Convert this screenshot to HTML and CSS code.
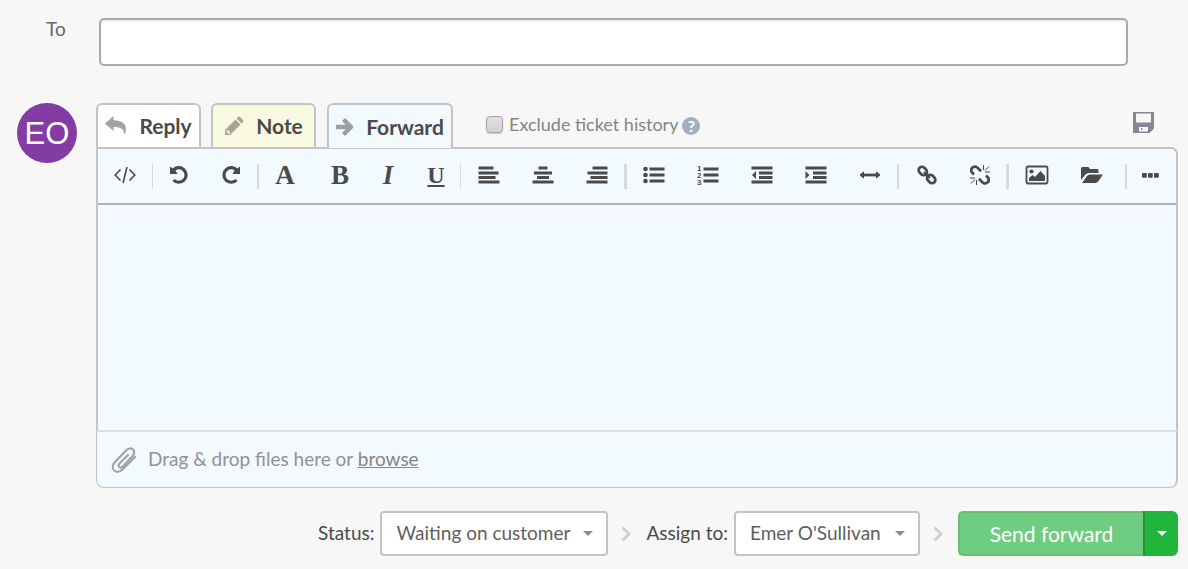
FILE: index.html
```html
<!DOCTYPE html>
<html lang="en">
<head>
    <meta charset="UTF-8">
    <meta name="viewport" content="width=device-width, initial-scale=1.0">
    <title>Forward ticket</title>
    <link rel="stylesheet" href="styles.css">
</head>
<body>
    <form class="composer">
        <div class="to-row">
            <label for="to">To</label>
            <input type="text" id="to" class="to-input">
        </div>

        <div class="reply-row">
            <div class="avatar">EO</div>

            <div class="editor">
                <div class="tabs">
                    <button type="button" class="tab tab-reply">
                        <svg width="22" height="20" viewBox="0 0 22 20"><path fill="#a3a3a3" d="M0 7.5 8.5 0v4.2C17 4.2 21 8 21 13c0 2.3-.7 4-1.8 5.5C19 13 16 11 8.5 11v4z"/></svg>
                        <span>Reply</span>
                    </button>
                    <button type="button" class="tab tab-note">
                        <svg width="20" height="20" viewBox="0 0 20 20"><path fill="#a5a594" fill-rule="evenodd" d="M1 14 11.5 3.5l5 5L6 19H1zM12.500 2.500 14 1q1-1 2 0l3 3q1 1 0 2l-1.500 1.500zM2.500 15v1.500H4V18l1.500-.3 1-1-3-3z"/></svg>
                        <span>Note</span>
                    </button>
                    <button type="button" class="tab tab-forward active">
                        <svg width="18" height="20" viewBox="0 0 18 20"><path fill="none" stroke="#9d9fa1" stroke-width="4.4" stroke-linejoin="round" d="M0 10h15M7.5 2.5 15 10l-7.5 7.5"/></svg>
                        <span>Forward</span>
                    </button>
                    <label class="exclude">
                        <input type="checkbox">
                        <span>Exclude ticket history</span>
                    </label>
                    <button type="button" class="help" aria-label="Help">?</button>
                    <button type="button" class="save" aria-label="Save draft">
                        <svg width="21" height="21" viewBox="0 0 21 21"><path fill="#838894" fill-rule="evenodd" d="M0 0h21v16.5L16.5 21H0zM3 1.5h15v9H3zM6 15h9v4.5H6z"/><path fill="#838894" d="M8 16h1.5v2H8z"/></svg>
                    </button>
                </div>

                <div class="box">
                    <div class="toolbar">
                        <button type="button" class="tool" aria-label="Code">
                            <svg width="22" height="18" viewBox="0 0 22 18"><path fill="none" stroke="#4a4a4a" stroke-width="1.6" d="M6.5 3.5 1.2 9l5.3 5.5M15.5 3.5 20.8 9l-5.3 5.5M13 1 9 17"/></svg>
                        </button>
                        <span class="sep"></span>
                        <button type="button" class="tool medium" aria-label="Undo">
                            <svg width="20" height="20" viewBox="0 0 20 20"><path fill="none" stroke="#4a4a4a" stroke-width="3.2" d="M4 5.5A7.3 7.3 0 1 1 4.5 15"/><path fill="#4a4a4a" d="M1 1.5V9h7.5l-2-3.5z"/></svg>
                        </button>
                        <button type="button" class="tool medium" aria-label="Redo">
                            <svg width="20" height="20" viewBox="0 0 20 20"><path fill="none" stroke="#4a4a4a" stroke-width="3.2" d="M16 5.5A7.3 7.3 0 1 0 15.5 15"/><path fill="#4a4a4a" d="M19 1.5V9h-7.5l2-3.5z"/></svg>
                        </button>
                        <span class="sep sep-2"></span>
                        <button type="button" class="tool medium letter font">A</button>
                        <button type="button" class="tool small letter">B</button>
                        <button type="button" class="tool small letter italic">I</button>
                        <button type="button" class="tool small letter underline">U</button>
                        <span class="sep"></span>
                        <button type="button" class="tool block" aria-label="Align left">
                            <svg width="22" height="18" viewBox="0 0 22 18"><path stroke="#4a4a4a" stroke-width="2.8" d="M.5 2h15M.5 7h20M.5 11.5h17M.5 16h21"/></svg>
                        </button>
                        <button type="button" class="tool" aria-label="Align center">
                            <svg width="22" height="18" viewBox="0 0 22 18"><path stroke="#4a4a4a" stroke-width="2.8" d="M6.5 2h9M2 7h18M5 11.5h12M.5 16h21"/></svg>
                        </button>
                        <button type="button" class="tool" aria-label="Align right">
                            <svg width="22" height="18" viewBox="0 0 22 18"><path stroke="#4a4a4a" stroke-width="2.8" d="M6.5 2h15M1.5 7h20M4.5 11.5h17M.5 16h21"/></svg>
                        </button>
                        <span class="sep sep-3"></span>
                        <button type="button" class="tool" aria-label="Bulleted list">
                            <svg width="22" height="18" viewBox="0 0 22 18"><path stroke="#4a4a4a" stroke-width="3" d="M6.5 3h15M6.5 9h15M6.5 15h15"/><g fill="#4a4a4a"><circle cx="2.5" cy="3" r="2.3"/><circle cx="2.5" cy="9" r="2.3"/><circle cx="2.5" cy="15" r="2.3"/></g></svg>
                        </button>
                        <button type="button" class="tool" aria-label="Numbered list">
                            <svg width="22" height="22" viewBox="0 0 22 22"><path stroke="#4a4a4a" stroke-width="3" d="M6.5 5h15M6.5 11h15M6.5 17h15"/><g class="digits"><text x="0" y="7">1</text><text x="0" y="14">2</text><text x="0" y="21">3</text></g></svg>
                        </button>
                        <button type="button" class="tool" aria-label="Outdent">
                            <svg width="22" height="18" viewBox="0 0 22 18"><path stroke="#4a4a4a" stroke-width="2.8" d="M.5 2h21M8 7h13.5M8 11.5h13.5M.5 16h21"/><path fill="#4a4a4a" d="M5 5v8L1 9z"/></svg>
                        </button>
                        <button type="button" class="tool" aria-label="Indent">
                            <svg width="22" height="18" viewBox="0 0 22 18"><path stroke="#4a4a4a" stroke-width="2.8" d="M.5 2h21M8 7h13.5M8 11.5h13.5M.5 16h21"/><path fill="#4a4a4a" d="M.5 5v8l4-4z"/></svg>
                        </button>
                        <button type="button" class="tool" aria-label="Horizontal line">
                            <svg width="22" height="18" viewBox="0 0 22 18"><path stroke="#4a4a4a" stroke-width="2.8" d="M3 9h16"/><path fill="#4a4a4a" stroke="#4a4a4a" stroke-linejoin="round" d="M1 9 4.5 6v6zM21 9l-3.5-3v6z"/></svg>
                        </button>
                        <span class="sep sep-2"></span>
                        <button type="button" class="tool link" aria-label="Insert link">
                            <svg width="20" height="20" viewBox="0 0 20 20"><g fill="none" stroke="#4a4a4a" stroke-width="2.7"><rect x="-4.5" y="-3.3" width="9" height="6.6" rx="3.3" transform="translate(5.8 6) rotate(45)"/><rect x="-4.5" y="-3.3" width="9" height="6.6" rx="3.3" transform="translate(14.2 14) rotate(45)"/><path stroke-width="2.2" d="m7 7 6 6"/></g></svg>
                        </button>
                        <button type="button" class="tool medium" aria-label="Remove link">
                            <svg width="20" height="20" viewBox="0 0 20 20"><g fill="none" stroke="#4a4a4a"><path stroke-width="2.7" d="M4 9.5 2.5 8C.5 6 1 4 2.3 2.7S6 1 7.5 2.7L11 6.2M16 10.5l1.5 1.5c2 2 1.5 4 .2 5.3S14 19 12.5 17.3L9 13.8"/><path stroke-width="1" d="M13.5 0v5M19 1.5l-4 4M20 7h-5M6.5 20v-5M1 18.5l4-4M0 13h5"/></g></svg>
                        </button>
                        <span class="sep sep-3"></span>
                        <button type="button" class="tool wide" aria-label="Insert image">
                            <svg width="24" height="20" viewBox="0 0 24 20"><rect x="1.5" y="1.5" width="21" height="17" rx="1.5" fill="none" stroke="#4a4a4a" stroke-width="1.8"/><circle cx="6.5" cy="6.5" r="2.1" fill="#4a4a4a"/><path fill="#4a4a4a" d="M4 16v-3l3.5-3 2.500 2 5.500-6 4.500 5v5z"/></svg>
                        </button>
                        <button type="button" class="tool wide" aria-label="Open file">
                            <svg width="24" height="18" viewBox="0 0 24 18"><path fill="#4a4a4a" d="M1 14V2.5Q1 1 2.5 1H8q1.5 0 1.5 1.5V3H17q1.5 0 1.5 1.5V7H9Q6.5 7 5 9zM2 17l5-7q1-1.5 3-1.5h13L18.5 15q-1.3 2-3.5 2z"/></svg>
                        </button>
                        <span class="sep sep-2 sep-last"></span>
                        <button type="button" class="tool small" aria-label="More">
                            <svg width="18" height="6" viewBox="0 0 18 6"><g fill="#4a4a4a"><rect x="0" y="1" width="4.8" height="4.8" rx="1"/><rect x="6" y="1" width="4.8" height="4.8" rx="1"/><rect x="12" y="1" width="4.8" height="4.8" rx="1"/></g></svg>
                        </button>
                    </div>
                    <textarea class="message" aria-label="Message"></textarea>
                </div>

                <div class="dropzone">
                    <svg width="26" height="28" viewBox="0 0 26 28"><path fill="none" stroke="#a2a5a7" stroke-width="2.2" stroke-linecap="round" d="m17 9-8.500 8.500c-2.500 2.800.7 5.500 3 3.200L21.500 10c5-5.500-2-10-6-6L4 16c-6 6.500 1.500 13.500 7.500 7.500L24 11"/></svg>
                    <span>Drag &amp; drop files here or <a href="#">browse</a></span>
                </div>
            </div>
        </div>

        <div class="actions">
            <label for="status">Status:</label>
            <div class="select status">
                <select id="status">
                    <option>Waiting on customer</option>
                </select>
            </div>
            <svg class="chevron" width="10" height="16" viewBox="0 0 10 16"><path fill="none" stroke="#cfcfcf" stroke-width="2.8" d="m1.5 1.5 6.5 6.5-6.5 6.5"/></svg>
            <label for="assign">Assign to:</label>
            <div class="select assign">
                <select id="assign">
                    <option>Emer O'Sullivan</option>
                </select>
            </div>
            <svg class="chevron" width="10" height="16" viewBox="0 0 10 16"><path fill="none" stroke="#cfcfcf" stroke-width="2.8" d="m1.5 1.5 6.5 6.5-6.5 6.5"/></svg>
            <button type="submit" class="send">Send forward</button>
            <button type="button" class="send-more" aria-label="More send options"></button>
        </div>
    </form>
</body>
</html>
```
FILE: styles.css
```css
* {
    box-sizing: border-box;
}
body {
    margin: 0;
    background-color: #f7f7f7;
    color: #4a4a4a;
    font-family: Lato, "Open Sans", sans-serif;
    font-size: 19px;
    line-height: 24px;
}
button, input, select, textarea {
    font: inherit;
    color: inherit;
    margin: 0;
}
button {
    display: flex;
    align-items: center;
    justify-content: center;
    padding: 0;
    border: none;
    background: none;
    cursor: pointer;
}
svg {
    display: block;
    flex: none;
}
.composer {
    padding: 18px 10px 12px 17px;
}

/* To field */
.to-row {
    display: flex;
    padding-right: 50px;
    margin-bottom: 37px;
}
.to-row label {
    width: 82px;
    padding-left: 29px;
    line-height: 22px;
    color: #666;
}
.to-input {
    flex: 1;
    height: 48px;
    padding: 0 12px;
    border: 2px solid #a9a9a9;
    border-radius: 5px;
    background-color: #fff;
    box-shadow: inset 0 2px 2px #eee;
}

/* Avatar and tabs */
.reply-row {
    display: flex;
    gap: 19px;
}
.avatar {
    width: 60px;
    height: 60px;
    border-radius: 50%;
    background-color: #843ba3;
    color: #fff;
    font-family: "Liberation Sans", Arial, sans-serif;
    font-size: 31px;
    line-height: 62px;
    text-align: center;
}
.editor {
    flex: 1;
}
.tabs {
    display: flex;
    align-items: flex-start;
    height: 44px;
}
.tab {
    width: 105px;
    height: 44px;
    margin-right: 10px;
    gap: 12px;
    border: 2px solid #c4c4c4;
    border-bottom: none;
    border-radius: 6px 6px 0 0;
    font-size: 21px;
    font-weight: bold;
}
.tab-reply {
    background-color: #fff;
}
.tab-note {
    margin-right: 11px;
    background-color: #f9f9e1;
}
.tab-forward {
    width: 126px;
    background-color: #f2f9ff;
}
.tab.active {
    height: 45px;
    z-index: 1;
}
.exclude {
    display: flex;
    align-items: center;
    gap: 6px;
    height: 42px;
    margin-left: 23px;
    font-size: 18px;
    color: #848484;
}
.exclude input {
    appearance: none;
    width: 17px;
    height: 17px;
    border: 1px solid #a3a3a3;
    border-radius: 4px;
    background: linear-gradient(#e2e2e2, #d2d2d2);
    box-shadow: 0 1px 1px #ccc;
}
.help {
    width: 18px;
    height: 18px;
    margin: 14px 0 0 4px;
    border-radius: 50%;
    background-color: #a5aebf;
    color: #fff;
    font-size: 16px;
    font-weight: bold;
    line-height: 18px;
}
.save {
    margin: 9px 24px 0 auto;
}

/* Editor */
.box {
    border: 2px solid #c4c4c4;
    border-bottom: none;
    border-top-right-radius: 7px;
    background-color: #f2f9ff;
}
.toolbar {
    display: flex;
    flex-wrap: wrap;
    align-items: center;
    min-height: 56px;
    border-bottom: 2px solid #b3b3b3;
}
.tool {
    width: 54px;
    height: 50px;
    padding-bottom: 2px;
}
.tool.medium {
    width: 52px;
}
.tool.small {
    width: 48px;
}
.tool.link,
.tool.wide {
    width: 55px;
}
.letter {
    font-family: "Liberation Serif", "Times New Roman", serif;
    font-size: 27px;
    font-weight: bold;
}
.font {
    margin-right: 5px;
}
.block {
    margin-left: 1px;
}
.italic {
    font-style: italic;
}
.underline {
    font-size: 24px;
    text-decoration: underline;
    text-decoration-thickness: 2px;
    text-underline-offset: 2px;
}
.digits {
    fill: #4a4a4a;
    font-family: "Liberation Sans", Arial, sans-serif;
    font-size: 8px;
    font-weight: bold;
}
.sep {
    width: 1px;
    height: 25px;
    background-color: #d9d9d9;
}
.sep-2 {
    width: 2px;
}
.sep-3 {
    width: 3px;
}
.sep-last {
    margin-left: 6px;
}
.message {
    display: block;
    width: 100%;
    height: 225px;
    padding: 12px;
    border: none;
    background: none;
    resize: none;
}
.dropzone {
    display: flex;
    align-items: center;
    gap: 11px;
    height: 58px;
    padding-left: 14px;
    border: 1px solid #c0c4c8;
    border-top: 2px solid #dedede;
    border-right: 2px solid #c4c4c4;
    border-radius: 0 0 8px 8px;
    background-color: #f2f9ff;
    color: #929292;
}
.dropzone span {
    padding-bottom: 2px;
}
.dropzone a {
    color: #868686;
}

/* Status, assignee and send */
.actions {
    display: flex;
    align-items: center;
    justify-content: flex-end;
    margin-top: 23px;
}
.actions label {
    margin-right: 6px;
    padding-bottom: 2px;
}
.select {
    position: relative;
}
.select::after {
    content: "";
    position: absolute;
    top: 20px;
    right: 15px;
    border: 5px solid transparent;
    border-top-color: #8c8c8c;
    border-bottom: none;
    pointer-events: none;
}
.select select {
    appearance: none;
    width: 100%;
    height: 45px;
    padding: 0 14px 2px;
    border: 2px solid #c4c4c4;
    border-radius: 4px;
    background-color: #fff;
    color: #606060;
}
.status {
    width: 228px;
}
.assign {
    width: 186px;
}
.chevron {
    margin: 0 15px 0 13px;
}
.send {
    width: 185px;
    height: 45px;
    border: 2px solid #69bd78;
    border-right: none;
    border-radius: 5px 0 0 5px;
    background-color: #6fcd81;
    color: #fff;
    font-size: 21px;
}
.send-more {
    width: 35px;
    height: 45px;
    border-left: 2px solid #1b9632;
    border-radius: 0 6px 6px 0;
    background-color: #22b53c;
}
.send-more::after {
    content: "";
    border: 5px solid transparent;
    border-top-color: #fff;
    border-bottom: none;
}
```
